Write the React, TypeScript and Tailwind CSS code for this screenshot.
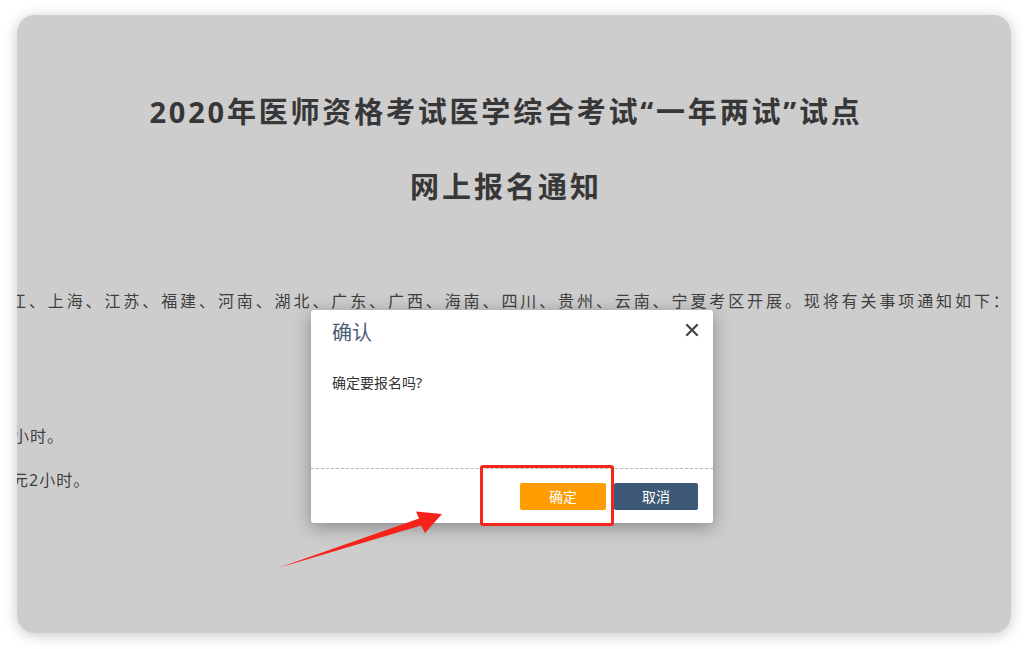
import React from 'react';

const font = { fontFamily: '"Noto Sans", "Noto Sans CJK SC", sans-serif' };

const ConfirmDialog: React.FC = () => {
  return (
    <div className="absolute left-[311px] top-[310px] w-[402px] h-[213px] bg-white rounded-[3px] shadow-[0_4px_18px_rgba(0,0,0,0.35)] flex flex-col">
      {/* en-tête */}
      <div className="h-[46px] flex items-center justify-between pl-[21px] pr-[14px]">
        <span className="text-[20px] leading-[26px] text-[#4d5c73]">确认</span>
        <svg width="14" height="14" viewBox="0 0 14 14" className="mb-[6px]">
          <path d="M2 2 L12 12 M12 2 L2 12" stroke="#4a4a4a" strokeWidth="2.4" strokeLinecap="round" />
        </svg>
      </div>
      {/* message */}
      <div className="h-[113px] pl-[21px] pt-[17px] border-b border-dashed border-[#b5b5b5]">
        <p className="text-[14px] leading-[20px] text-[#333]">确定要报名吗?</p>
      </div>
      {/* boutons */}
      <div className="flex-1 flex items-start justify-end gap-[8px] pr-[15px] pt-[14px]">
        <button className="w-[86px] h-[27px] rounded-[2px] bg-[#ff9c00] text-white text-[14px]">确定</button>
        <button className="w-[84px] h-[27px] rounded-[2px] bg-[#3d5975] text-white text-[14px]">取消</button>
      </div>
    </div>
  );
};

export default function App() {
  return (
    <div className="relative w-[1028px] h-[649px] bg-white overflow-hidden" style={font}>
      <div className="mx-[17px] mt-[15px] h-[618px] rounded-[18px] bg-[#cecdce] shadow-[0_2px_14px_rgba(0,0,0,0.22)] overflow-hidden">
        <div className="flex flex-col items-center gap-[35px] pt-[77px] pr-[16px] text-[#373737] font-bold">
          <h1 className="text-[29px] leading-[40px] tracking-[2.8px]">2020年医师资格考试医学综合考试“一年两试”试点</h1>
          <h2 className="text-[29px] leading-[40px] tracking-[3px]">网上报名通知</h2>
        </div>

        <div className="mt-[81px] text-[16px] leading-[26px] text-[#3f3f3f] whitespace-nowrap">
          <p className="-ml-[7px] tracking-[2.9px]">江、上海、江苏、福建、河南、湖北、广东、广西、海南、四川、贵州、云南、宁夏考区开展。现将有关事项通知如下：</p>
          <p className="-ml-[4px] mt-[109px] tracking-[1px]">小时。</p>
          <p className="-ml-[5px] mt-[18px] tracking-[1px]">元2小时。</p>
        </div>
      </div>

      <ConfirmDialog />

      {/* cadre rouge de mise en évidence */}
      <div className="absolute left-[480px] top-[465px] w-[134px] h-[61px] border-[3px] border-[#f2261b] rounded-[3px]" />

      {/* flèche */}
      <svg className="absolute left-0 top-0" width="1028" height="649" viewBox="0 0 1028 649">
        <polygon
          points="278,568 419,518.5 416,511.5 442,514 425,533 421,525.5"
          fill="#f5231a"
        />
      </svg>
    </div>
  );
}
